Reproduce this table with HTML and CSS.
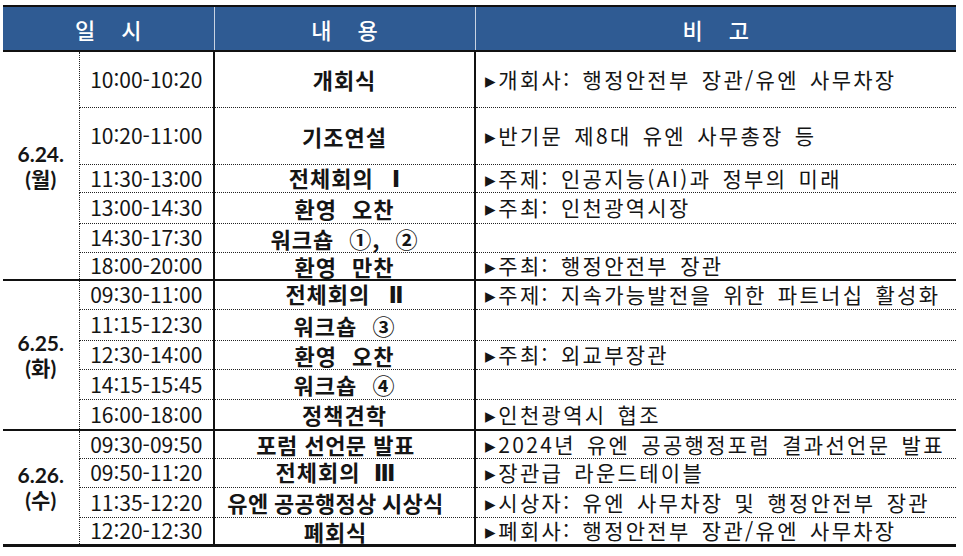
FILE: index.html
```html
<!DOCTYPE html>
<html lang="ko">
<head>
<meta charset="utf-8">
<link rel="stylesheet" href="styles.css">
</head>
<body>
<table class="sched">
  <colgroup>
    <col class="c-date"><col class="c-time"><col class="c-prog"><col class="c-note">
  </colgroup>
  <thead>
    <tr class="head">
      <th colspan="2"><span class="sp">일시</span></th>
      <th><span class="sp">내용</span></th>
      <th><span class="sp">비고</span></th>
    </tr>
  </thead>
  <tbody class="grp">
    <tr class="h56"><td class="date" rowspan="6"><div class="d">6.24.</div><div class="d">(월)</div></td><td class="time">10:00-10:20</td><td class="prog">개회식</td><td class="note">▸개회사: 행정안전부 장관/유엔 사무차장</td></tr>
    <tr class="h57"><td class="time">10:20-11:00</td><td class="prog">기조연설</td><td class="note">▸반기문 제8대 유엔 사무총장 등</td></tr>
    <tr class="h28"><td class="time">11:30-13:00</td><td class="prog ws-m">전체회의 <span class="rn">Ⅰ</span></td><td class="note">▸주제: 인공지능(AI)과 정부의 미래</td></tr>
    <tr class="h31"><td class="time">13:00-14:30</td><td class="prog ws-m">환영 오찬</td><td class="note">▸주최: 인천광역시장</td></tr>
    <tr class="h29"><td class="time">14:30-17:30</td><td class="prog ws-m">워크숍 ①, ②</td><td class="note"></td></tr>
    <tr class="h28"><td class="time">18:00-20:00</td><td class="prog ws-m">환영 만찬</td><td class="note">▸주최: 행정안전부 장관</td></tr>
  </tbody>
  <tbody class="grp">
    <tr class="h29"><td class="date" rowspan="5"><div class="d">6.25.</div><div class="d">(화)</div></td><td class="time">09:30-11:00</td><td class="prog ws-m">전체회의 <span class="rn">Ⅱ</span></td><td class="note">▸주제: 지속가능발전을 위한 파트너십 활성화</td></tr>
    <tr class="h31"><td class="time">11:15-12:30</td><td class="prog ws-m">워크숍 ③</td><td class="note"></td></tr>
    <tr class="h29"><td class="time">12:30-14:00</td><td class="prog ws-m">환영 오찬</td><td class="note">▸주최: 외교부장관</td></tr>
    <tr class="h30"><td class="time">14:15-15:45</td><td class="prog ws-m">워크숍 ④</td><td class="note"></td></tr>
    <tr class="h31"><td class="time">16:00-18:00</td><td class="prog">정책견학</td><td class="note">▸인천광역시 협조</td></tr>
  </tbody>
  <tbody class="grp g3">
    <tr class="h28"><td class="date" rowspan="4"><div class="d">6.26.</div><div class="d">(수)</div></td><td class="time">09:30-09:50</td><td class="prog ws-l">포럼 선언문 발표</td><td class="note">▸2024년 유엔 공공행정포럼 결과선언문 발표</td></tr>
    <tr class="h29"><td class="time">09:50-11:20</td><td class="prog ws-n">전체회의 <span class="rn">Ⅲ</span></td><td class="note">▸장관급 라운드테이블</td></tr>
    <tr class="h30"><td class="time">11:35-12:20</td><td class="prog ws-s">유엔 공공행정상 시상식</td><td class="note">▸시상자: 유엔 사무차장 및 행정안전부 장관</td></tr>
    <tr class="h28"><td class="time">12:20-12:30</td><td class="prog">폐회식</td><td class="note">▸폐회사: 행정안전부 장관/유엔 사무차장</td></tr>
  </tbody>
</table>
</body>
</html>
```
FILE: styles.css
```css
html, body {
  margin: 0;
  padding: 0;
  background: #ffffff;
}
body {
  padding: 5px 0 0 3px;
  font-family: "Noto Sans CJK KR", "Noto Sans", sans-serif;
  color: #151515;
}
.sched {
  border-collapse: collapse;
  table-layout: fixed;
  width: 953px;
  border-top: 2px solid #111;
  border-bottom: 3px solid #111;
}
.c-date { width: 76px; }
.c-time { width: 135px; }
.c-prog { width: 261px; }
.c-note { width: 481px; }

.head th {
  height: 43px;
  padding: 0;
  background: #2f5b93;
  color: #ffffff;
  font-weight: 500;
  font-size: 22px;
  line-height: 1;
  text-align: center;
  border-left: 1px solid #c9d3e2;
  border-bottom: 1px solid #9aa3ad;
}
.head th:first-child { border-left: none; }
.sp {
  letter-spacing: 26px;
  padding-left: 26px;
}

td {
  padding: 0;
  line-height: 1;
  vertical-align: middle;
  border-top: 1px dotted #222;
}
.grp tr:first-child td { border-top: 2px solid #111; }

.date {
  text-align: center;
  font-weight: 700;
  font-size: 21px;
  border-right: 1px dotted #222;
}
.d {
  font-family: "Lato", "Noto Sans CJK KR", sans-serif;
  line-height: 25px;
  height: 25px;
}
.time {
  text-align: center;
  font-size: 21px;
  border-right: 2px solid #111;
}
.prog {
  text-align: center;
  font-weight: 700;
  font-size: 22px;
  letter-spacing: 1px;
  border-right: 2px solid #111;
  white-space: nowrap;
}
.rn {
  font-family: "DejaVu Sans", "Noto Sans CJK KR", sans-serif;
  font-size: 23px;
  letter-spacing: 0;
  margin-left: 3px;
}
.g3 .prog { padding-right: 18px; }
.ws-s { word-spacing: -1px; letter-spacing: 0.3px; }
.ws-m { word-spacing: 8px; }
.ws-n { word-spacing: 3px; }
.ws-l { word-spacing: 0; letter-spacing: 0.5px; }
.note {
  text-align: left;
  font-size: 21px;
  padding-left: 9px;
  white-space: nowrap;
  letter-spacing: 2.3px;
  word-spacing: 3px;
}

.h56 { height: 56px; }
.h57 { height: 57px; }
.h28 { height: 28px; }
.h29 { height: 29px; }
.h30 { height: 30px; }
.h31 { height: 31px; }
```
